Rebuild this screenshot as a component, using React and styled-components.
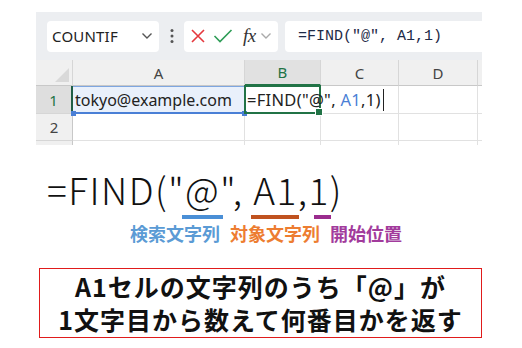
import styled, { createGlobalStyle } from "styled-components"

const GlobalStyle = createGlobalStyle`
    html, body {
        margin: 0;
        padding: 0;
        background: #fff;
    }
    body {
        width: 522px;
        height: 348px;
        overflow: hidden;
        font-family: "Noto Sans", "Noto Sans CJK JP", sans-serif;
    }
`

const COLS = [37, 172, 76, 78, 79, 4]

const Chevron = ({ color = "#555" }) => (
    <svg width="12" height="8" viewBox="0 0 12 8">
        <path d="M1.5 1.5 L6 6 L10.5 1.5" fill="none" stroke={color} strokeWidth="1.4" />
    </svg>
)

const App = () => {
    return (
        <Page>
            <GlobalStyle />
            <Sheet>
                <Toolbar>
                    <NameBox>
                        <span>COUNTIF</span>
                        <Chevron />
                    </NameBox>
                    <Dots>
                        <svg width="4" height="16" viewBox="0 0 4 16">
                            <circle cx="2" cy="2.5" r="1.5" fill="#555" />
                            <circle cx="2" cy="8" r="1.5" fill="#555" />
                            <circle cx="2" cy="13.5" r="1.5" fill="#555" />
                        </svg>
                    </Dots>
                    <FxBox>
                        <svg width="16" height="16" viewBox="0 0 16 16">
                            <path d="M2 2 L14 14 M14 2 L2 14" stroke="#e5383d" strokeWidth="1.6" fill="none" />
                        </svg>
                        <svg width="20" height="16" viewBox="0 0 20 16">
                            <path d="M1.5 8 L7 13.5 L18.5 2" stroke="#2e9d57" strokeWidth="1.6" fill="none" />
                        </svg>
                        <Fx>fx</Fx>
                        <Chevron color="#aaa" />
                    </FxBox>
                    <FormulaBar>=FIND("@", A1,1)</FormulaBar>
                </Toolbar>
                <Grid>
                    <Corner>
                        <svg width="14" height="14" viewBox="0 0 14 14">
                            <path d="M14 0 L14 14 L0 14 Z" fill="#d9d9d9" />
                        </svg>
                    </Corner>
                    <ColHead>A</ColHead>
                    <ColHead $active>B</ColHead>
                    <ColHead>C</ColHead>
                    <ColHead>D</ColHead>
                    <Edge $head />

                    <RowHead $active>1</RowHead>
                    <RefCell>tokyo@example.com</RefCell>
                    <ActiveCell>
                        <CellText>
                            {'=FIND("@", '}<Ref>A1</Ref>,1)
                        </CellText>
                        <Caret />
                    </ActiveCell>
                    <Cell />
                    <Cell />
                    <Edge />

                    <RowHead>2</RowHead>
                    <Cell />
                    <Cell />
                    <Cell />
                    <Cell />
                    <Edge />

                    <RowHead $short />
                    <Cell $short />
                    <Cell $short />
                    <Cell $short />
                    <Cell $short />
                    <Edge $short />
                </Grid>
            </Sheet>

            <Explain>
                <BigFormula>
                    =FIND("<Mark $color="#4a8fd6" $l={3} $r={-3}>@</Mark>",{" "}
                    <Mark $color="#c0521f" $l={2} $r={-1}>A1</Mark>,<Mark $color="#9a2c8e" $l={-5} $r={-1}>1</Mark>)
                </BigFormula>
                <Labels>
                    <Label $color="#5b9bd5">検索文字列</Label>
                    <Label $color="#ed7d31">対象文字列</Label>
                    <Label $color="#a23b9c">開始位置</Label>
                </Labels>
                <Note>
                    <NoteLine>A1セルの文字列のうち「@」が</NoteLine>
                    <NoteLine>1文字目から数えて何番目かを返す</NoteLine>
                </Note>
            </Explain>
        </Page>
    )
}

export default App

const Page = styled.div`
    width: 522px;
    height: 348px;
    padding: 12px 40px 0 36px;
    box-sizing: border-box;
`

const Sheet = styled.div`
    width: 446px;
    background: #fff;
`

const Toolbar = styled.div`
    height: 48px;
    background: #eceef1;
    display: flex;
    align-items: center;
    padding: 0 0 0 11px;
    box-sizing: border-box;
`

const Box = styled.div`
    height: 31px;
    background: #fff;
    border-radius: 4px;
    display: flex;
    align-items: center;
    box-sizing: border-box;
`

const NameBox = styled(Box)`
    width: 112px;
    padding: 0 6px 0 5px;
    justify-content: space-between;
    font-family: "Noto Sans", sans-serif;
    font-size: 15px;
    color: #222;
    letter-spacing: 0.2px;
`

const Dots = styled.div`
    width: 25px;
    display: flex;
    justify-content: center;
    align-items: center;
`

const FxBox = styled(Box)`
    width: 94px;
    padding: 0 6px 0 6px;
    gap: 7px;
`

const Fx = styled.span`
    font-family: "Liberation Serif", serif;
    font-style: italic;
    font-size: 19px;
    color: #333;
    margin-left: 3px;
    margin-right: -3px;
    letter-spacing: -0.5px;
`

const FormulaBar = styled(Box)`
    flex: 1;
    margin-left: 7px;
    border-radius: 4px 0 0 4px;
    padding-left: 13px;
    font-family: "Liberation Mono", "DejaVu Sans Mono", monospace;
    font-size: 15px;
    color: #1e2a47;
    white-space: pre;
`

const Grid = styled.div`
    display: grid;
    grid-template-columns: ${COLS.map((c) => c + "px").join(" ")};
    grid-template-rows: 26px 28px 27px 4px;
    font-family: "Noto Sans", "Noto Sans CJK JP", sans-serif;
`

const Corner = styled.div`
    background: #f0f0f0;
    border-right: 1px solid #d6d6d6;
    border-bottom: 1px solid #c8c8c8;
    display: flex;
    align-items: flex-end;
    justify-content: flex-end;
    padding: 0 3px 3px 0;
`

const ColHead = styled.div`
    background: ${(p) => (p.$active ? "#e1e1e1" : "#f0f0f0")};
    color: ${(p) => (p.$active ? "#217346" : "#444")};
    border-right: 1px solid #d6d6d6;
    border-bottom: ${(p) => (p.$active ? "2px solid #217346" : "1px solid #c8c8c8")};
    display: flex;
    align-items: center;
    justify-content: center;
    font-size: 15px;
`

const RowHead = styled.div`
    background: ${(p) => (p.$active ? "#dedede" : "#f0f0f0")};
    color: ${(p) => (p.$active ? "#217346" : "#444")};
    border-right: ${(p) => (p.$active ? "2px solid #1f5e45" : "1px solid #c8c8c8")};
    border-bottom: ${(p) => (p.$short ? "none" : "1px solid #d6d6d6")};
    display: flex;
    align-items: center;
    justify-content: center;
    font-size: 15px;
`

const Cell = styled.div`
    border-right: 1px solid #e1e1e1;
    border-bottom: ${(p) => (p.$short ? "none" : "1px solid #e1e1e1")};
`

const Edge = styled.div`
    background: ${(p) => (p.$head ? "#f0f0f0" : "#fff")};
    border-bottom: ${(p) => (p.$head ? "1px solid #c8c8c8" : p.$short ? "none" : "1px solid #e1e1e1")};
`

const RefCell = styled.div`
    position: relative;
    background: #e9f0fb;
    border-top: 1px solid #7ea6e0;
    border-bottom: 2px solid #4a7fd6;
    border-right: 1px solid #7ea6e0;
    display: flex;
    align-items: center;
    padding-left: 2px;
    font-size: 16px;
    color: #222;
    &::before, &::after {
        content: "";
        position: absolute;
        bottom: -4px;
        width: 5px;
        height: 5px;
        background: #4a7fd6;
    }
    &::before { left: -2px; }
    &::after { right: -3px; }
`

const ActiveCell = styled.div`
    position: relative;
    border: 2px solid #217346;
    margin: -1px 0 0 -1px;
    display: flex;
    align-items: center;
    padding-left: 1px;
    font-size: 16.5px;
    color: #222;
    z-index: 1;
    &::after {
        content: "";
        position: absolute;
        right: -4px;
        bottom: -4px;
        width: 6px;
        height: 6px;
        background: #217346;
        border: 1px solid #fff;
    }
`

const CellText = styled.span`
    white-space: pre;
    letter-spacing: 0.3px;
`

const Ref = styled.span`
    color: #4a7fd6;
`

const Caret = styled.span`
    flex: none;
    width: 1px;
    height: 22px;
    background: #222;
    margin-left: 2px;
`

const Explain = styled.div`
    display: flex;
    flex-direction: column;
`

const BigFormula = styled.div`
    margin-top: 22px;
    margin-left: 11px;
    font-family: "Noto Sans CJK JP", "Noto Sans", sans-serif;
    font-weight: 300;
    font-size: 37px;
    line-height: 44px;
    letter-spacing: 1.5px;
    color: #111;
    white-space: nowrap;
`

const Mark = styled.span`
    position: relative;
    &::after {
        content: "";
        position: absolute;
        left: ${(p) => -p.$l}px;
        right: ${(p) => p.$r}px;
        bottom: -3px;
        height: 4px;
        background: ${(p) => p.$color};
    }
`

const Labels = styled.div`
    display: flex;
    gap: 10px;
    margin-left: 94px;
    margin-top: 9px;
`

const Label = styled.span`
    font-family: "Noto Sans CJK JP", sans-serif;
    font-weight: 700;
    font-size: 18px;
    line-height: 26px;
    color: ${(p) => p.$color};
`

const Note = styled.div`
    margin-top: 22px;
    margin-left: 3px;
    width: 443px;
    height: 70px;
    box-sizing: border-box;
    border: 1.5px solid #e01b1b;
    display: flex;
    flex-direction: column;
    align-items: center;
    justify-content: center;
`

const NoteLine = styled.div`
    font-family: "Noto Sans CJK JP", sans-serif;
    font-weight: 700;
    font-size: 25px;
    line-height: 33px;
    color: #111;
    letter-spacing: 1px;
    white-space: nowrap;
`
